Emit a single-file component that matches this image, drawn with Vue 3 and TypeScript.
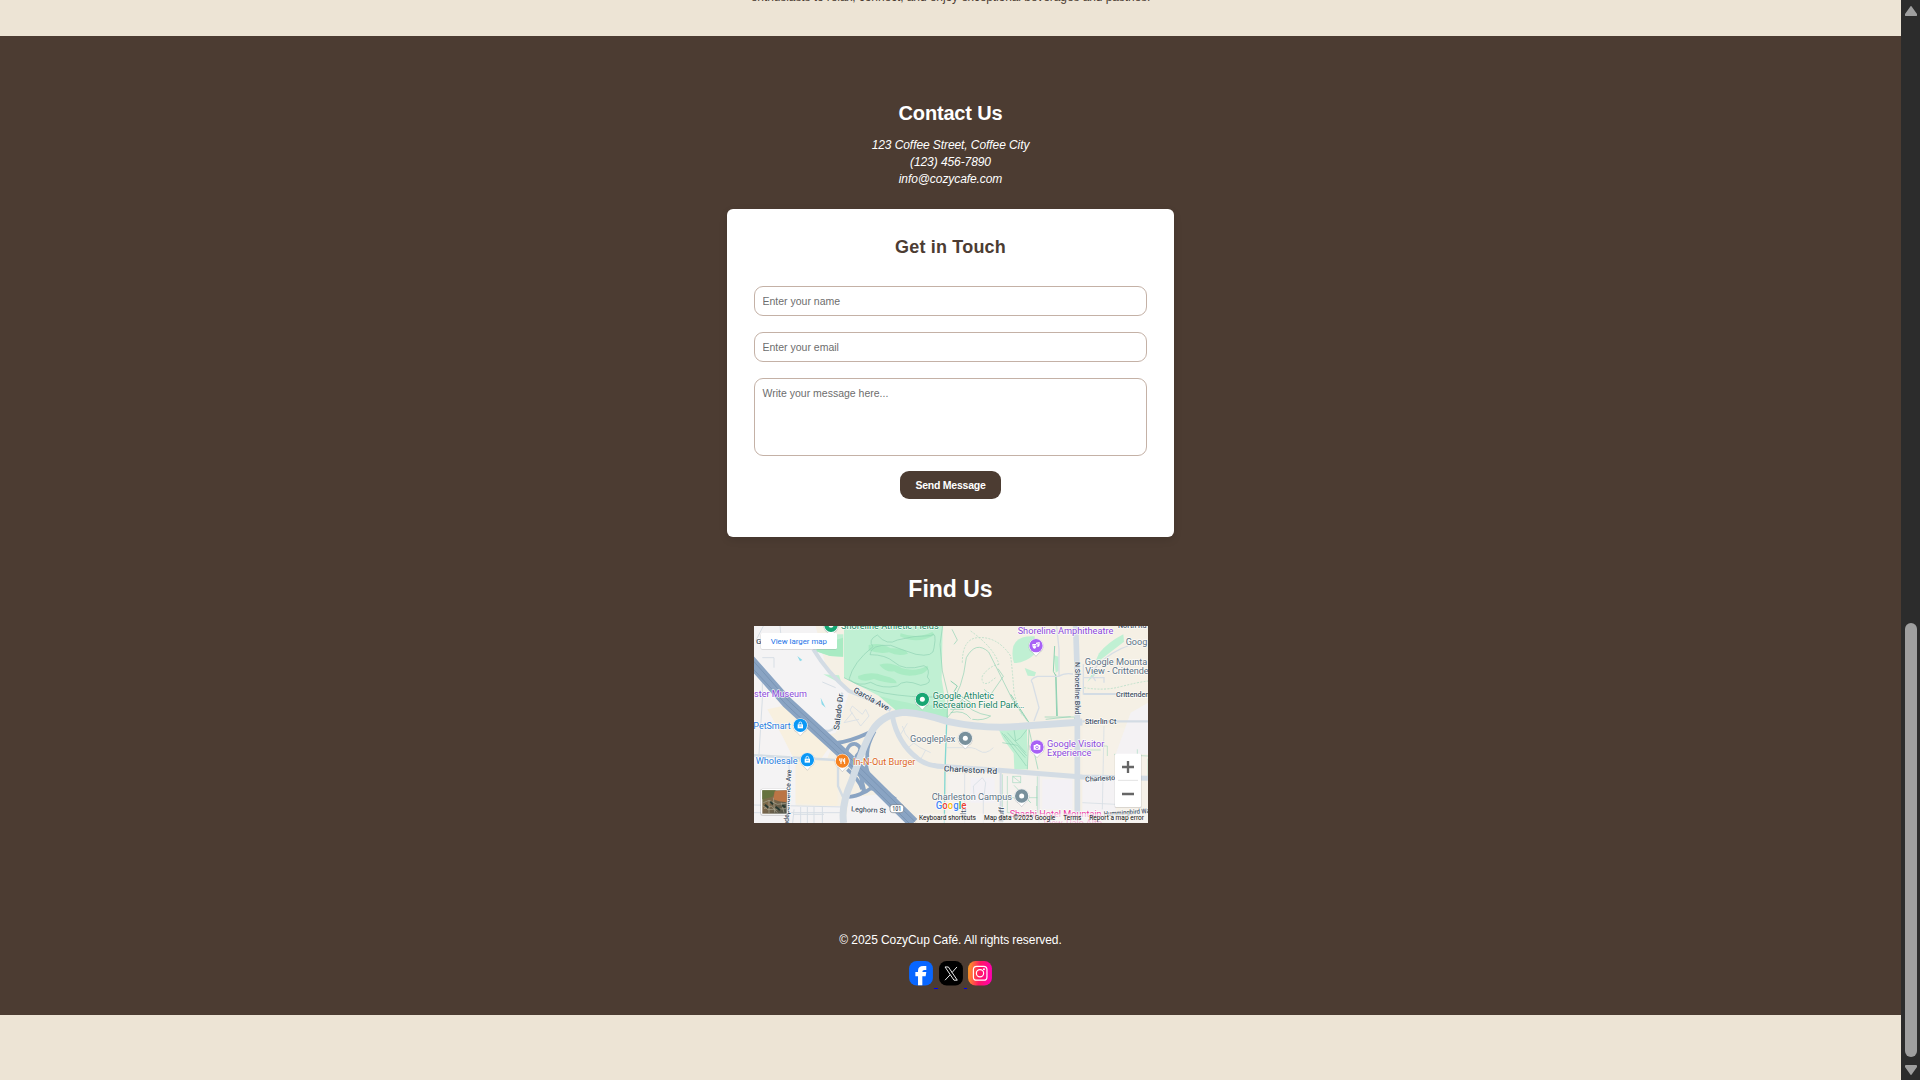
<script setup lang="ts">
import { ref } from 'vue'

const name = ref('')
const email = ref('')
const message = ref('')

interface Label {
  text: string
  x: number
  y: number
  width: number
  kind: string
  rotate?: number
}

const labels: Label[] = [
  { text: 'Shoreline Athletic Fields', x: 261, y: 8, width: 293, kind: 'park' },
  { text: 'Google Athletic', x: 536, y: 219, width: 184, kind: 'park' },
  { text: 'Recreation Field Park…', x: 536, y: 247, width: 275, kind: 'park' },
  { text: 'Shoreline Amphitheatre', x: 791, y: 25, width: 287, kind: 'fun' },
  { text: 'ster Museum', x: 0, y: 212, width: 159, kind: 'fun' },
  { text: 'Google Visitor', x: 879, y: 362, width: 172, kind: 'fun' },
  { text: 'Experience', x: 879, y: 389, width: 133, kind: 'fun' },
  { text: 'PetSmart', x: -2, y: 310, width: 112, kind: 'shop' },
  { text: 'Wholesale', x: 5, y: 413, width: 126, kind: 'shop' },
  { text: 'In-N-Out Burger', x: 297, y: 418, width: 187, kind: 'food' },
  { text: 'Googleplex', x: 468, y: 349, width: 136, kind: 'place' },
  { text: 'Charleston Campus', x: 533, y: 522, width: 241, kind: 'place' },
  { text: 'Goog', x: 1115, y: 56, width: 65, kind: 'place' },
  { text: 'Google Mounta', x: 992, y: 117, width: 188, kind: 'place' },
  { text: 'View - Crittende', x: 994, y: 144, width: 190, kind: 'place' },
  { text: 'Shashi Hotel Mountain', x: 767, y: 573, width: 276, kind: 'hotel' },
  { text: 'View, Palo Alto', x: 868, y: 599, width: 176, kind: 'hotel' },
  { text: 'North Rd', x: 1092, y: 7, width: 86, kind: 'road' },
  { text: 'Crittenden', x: 1086, y: 213, width: 100, kind: 'road' },
  { text: 'Stierlin Ct', x: 993, y: 295, width: 94, kind: 'road' },
  { text: 'Charlesto', x: 994, y: 467, width: 90, kind: 'road', rotate: -3 },
  { text: 'Hummingbird Way', x: 1050, y: 571, width: 146, kind: 'road', rotate: -4 },
  { text: 'Leghorn St', x: 291, y: 556, width: 105, kind: 'road', rotate: 3 },
  { text: 'N Shoreline Blvd', x: 964, y: 108, width: 158, kind: 'road', rotate: 90 },
  { text: 'Salado Dr', x: 255, y: 313, width: 110, kind: 'street', rotate: -83 },
  { text: 'Garcia Ave', x: 296, y: 197, width: 119, kind: 'street', rotate: 29 },
  { text: 'Charleston Rd', x: 569, y: 436, width: 160, kind: 'street', rotate: 3 },
  { text: 'Independence Ave', x: 103, y: 606, width: 175, kind: 'road', rotate: -87 },
  { text: 'Huff', x: 748, y: 588, width: 45, kind: 'road', rotate: -88 },
  { text: 'Alta', x: 636, y: 580, width: 38, kind: 'road', rotate: -90 },
]

interface Pin {
  x: number
  y: number
  color: string
  glyph: string
}

const pins: Pin[] = [
  { x: 231, y: -2, color: '#18a673', glyph: 'dot' },
  { x: 505, y: 220, color: '#18a673', glyph: 'dot' },
  { x: 634, y: 337, color: '#78909c', glyph: 'dot' },
  { x: 803, y: 510, color: '#78909c', glyph: 'dot' },
  { x: 846, y: 59, color: '#a861f5', glyph: 'mask' },
  { x: 849, y: 363, color: '#a861f5', glyph: 'camera' },
  { x: 139, y: 298, color: '#0b98f5', glyph: 'bag' },
  { x: 160, y: 401, color: '#0b98f5', glyph: 'bag' },
  { x: 265, y: 405, color: '#f58220', glyph: 'fork' },
]
</script>

<template>
  <div class="window">
    <main class="page">
      <section class="about">
        <p>enthusiasts to relax, connect, and enjoy exceptional beverages and pastries.</p>
      </section>

      <section class="contact">
        <h2>Contact Us</h2>
        <address>
          <span>123 Coffee Street, Coffee City</span>
          <span>(123) 456-7890</span>
          <span>info@cozycafe.com</span>
        </address>

        <form class="card" @submit.prevent>
          <h3>Get in Touch</h3>
          <input v-model="name" type="text" placeholder="Enter your name" />
          <input v-model="email" type="email" placeholder="Enter your email" />
          <textarea v-model="message" placeholder="Write your message here..."></textarea>
          <button type="submit">Send Message</button>
        </form>

        <h1>Find Us</h1>
        <svg class="map" viewBox="0 0 1182 591" preserveAspectRatio="none">
          <defs>
            <linearGradient id="sat" x1="0" y1="0" x2="1" y2="1">
              <stop offset="0" stop-color="#647746" />
              <stop offset=".4" stop-color="#80694a" />
              <stop offset="1" stop-color="#4a5149" />
            </linearGradient>
          </defs>
          <rect width="1182" height="591" fill="#f5f0e5" />
          <!-- built-up blocks -->
          <path d="M0 0H185L215 120L285 200L245 320L210 330L0 100Z" fill="#f4f3f4" />
          <path d="M0 110L240 350L220 395L0 385Z" fill="#f5f3f3" />
          <path d="M0 388L125 398V540H270V591H0Z" fill="#f4f3f4" />
          <path d="M40 250L110 235L235 350L200 400H120L85 330Z" fill="#f8f0df" />
          <path d="M125 398H250V540L125 532Z" fill="#f8f0df" />
          <path d="M285 515L375 505L460 591H275Z" fill="#f4f3f4" />
          <path d="M580 445H960V591H580Z" fill="#f5f2ee" />
          <path d="M650 455H722V530H650ZM865 460H955V550H865Z" fill="#f3f1f5" />
          <path d="M985 305H1182V591H985Z" fill="#f6f1e8" />
          <path d="M1130 260L1182 230V385H1085Z" fill="#f4f2f4" />
          <path d="M985 460H1085V591H985Z" fill="#f4f2f4" />
          <!-- parks -->
          <g fill="#c0f0d3">
            <path d="M270 0H566L563 160L582 276L425 252L375 210L270 155Z" />
            <path d="M205 25H268V92L228 90L184 75Z" />
            <path d="M208 145L255 148L264 175Z" />
            <path d="M778 60Q790 28 842 31V85Q812 112 780 111Q772 88 778 60Z" />
            <path d="M812 126L846 139L842 151L821 149Z" />
            <path d="M735 312L819 308L821 430L781 431L779 382L748 340Z" />
            <path d="M1108 25Q1060 50 1035 82L1026 103L1035 105L1070 78L1110 47Z" />
            <path d="M900 88L914 92V134L905 140ZM1020 133L1040 131L1000 168Z" />
          </g>
          <g fill="#a9ebc3">
            <path d="M205 55L267 35V92L228 90L184 75Z" />
            <path d="M375 210L412 220L490 236L582 240V276L425 252Z" opacity=".65" />
            <path d="M344 57Q380 47 410 67Q455 66 462 83Q433 92 405 79Q375 85 344 73ZM312 150Q350 134 390 149Q430 158 428 172Q390 171 360 159Q330 170 313 158ZM376 116Q410 105 443 126Q485 139 520 119Q530 129 504 143Q455 158 420 136Q395 140 376 116ZM440 22Q490 40 535 18L542 27Q490 57 438 31Z" />
          </g>
          <!-- trails -->
          <g fill="none" stroke="#8fd2b3" stroke-width="2">
            <path d="M285 160Q298 108 357 62Q340 42 370 27Q400 61 430 42Q480 28 530 29Q550 12 540 66Q540 95 486 85Q440 70 410 58Q350 54 348 86Q395 86 420 108Q450 137 510 119Q530 128 520 153Q540 172 500 178Q450 157 430 180Q385 190 350 169Q315 184 285 160" />
            <path d="M270 155Q350 200 430 207Q520 218 575 210M566 0L558 55L565 135L582 205L579 280" />
            <path d="M594 10L610 42L600 55M588 230Q625 195 637 95Q665 43 704 78L775 220L820 285M732 128L748 151L710 206L690 190M650 278Q630 250 590 260M625 220Q645 260 710 270Q690 285 655 280M625 220L580 275M589 250H630" />
            <path d="M590 165L610 180L600 197L650 230M770 205L825 290M902 60L898 136L906 150L910 270M905 145L908 270" stroke-width="3" />
            <path d="M872 273H962V285M875 280L950 272M751 325L814 395M760 320L815 380M743 320L817 420M780 310L785 345L800 335L819 310M745 350L790 358L818 390M820 430L825 310L852 430" />
            <path d="M578 292L573 430L571 591" stroke="#83d8d2" stroke-width="4" />
            <path d="M745 445V591M760 450V560H850V451M776 451H800V470H776ZM776 451L800 470M780 478L830 530L792 490M848 480V540M740 515H850M775 570L850 565M981 360H1060V390M1080 385L1182 390M1150 370V390M985 372H1040M1182 398V450" stroke-width="1.5" />
          </g>
          <g fill="none" stroke="#a8d9c0" stroke-width="2" stroke-dasharray="6 4">
            <path d="M625 110Q625 40 670 35Q730 30 770 90Q775 130 780 200Q790 240 805 270M650 15Q720 65 735 115M735 115Q705 120 685 150Q680 180 705 170L725 155M990 185Q1050 195 1100 182T1182 165" />
          </g>
          <!-- minor roads -->
          <g fill="none" stroke="#d7dee5" stroke-width="4">
            <path d="M840 285L855 245L835 170Q825 160 850 151H915Q930 140 957 144M915 150V70L908 0M988 115V204H1110M990 155H1050V170M1160 50Q1100 60 1050 100T1025 165" />
            <path d="M28 0L5 45M25 150V220L15 385M78 0L85 70M60 125V95H25M245 185L205 168M120 550L116 591M0 537L270 543M140 543V591M160 543V591M180 543V591M205 543V591M0 560H270M105 398V591M120 565H210" stroke-width="3" />
            <path d="M445 300Q455 350 530 380M460 292L440 325M515 372L500 400M465 363L480 350M630 367Q655 360 675 374T718 365M579 365H630M320 300L288 252L295 240L325 265L335 250L345 270L320 300M295 260L270 290L315 280M660 510L658 480L685 455L695 470L690 510M688 510V591M632 440V591M855 450V591M1050 300L1045 550M985 530L1085 535" stroke-width="2.5" />
          </g>
          <g fill="none" stroke="#d3dce4">
            <path d="M0 388L245 402" stroke-width="8" />
            <path d="M178 70Q220 140 285 195Q365 225 410 252" stroke-width="12" />
            <path d="M265 200Q252 240 250 290Q235 330 190 305M985 286H1182M252 400V480L270 520" stroke-width="7" />
            <path d="M965 0L970 150V591" stroke-width="17" />
            <path d="M989 204H1110M740 440V591" stroke-width="6" />
            <path d="M415 270Q430 350 490 397Q520 422 575 422L735 433L985 453L1182 457" stroke-width="15" />
          </g>
          <!-- freeway -->
          <g fill="none" stroke="#8aa4c3">
            <path d="M-15 100L100 230L285 400L478 591" stroke-width="34" />
            <path d="M180 310L240 352Q280 350 350 318M362 315Q337 360 340 390Q330 420 350 460L405 505" stroke-width="11" />
            <path d="M275 390Q280 350 305 354Q330 365 308 389Q298 410 315 430L330 490Q330 508 285 513Q330 504 350 487Q385 490 425 520M280 430Q315 460 325 490" stroke-width="11" />
          </g>
          <g fill="none" stroke="#728eae" stroke-width="2">
            <path d="M-8 98L104 225L290 398L484 588M-20 110L96 235L280 407L468 594" />
          </g>
          <path d="M269 591Q260 540 293 465Q332 350 354 315Q385 265 450 259Q510 263 580 286Q690 310 800 301L985 288" fill="none" stroke="#d3dce4" stroke-width="21" />
          <path d="M130 90L145 102L138 106ZM200 215L215 245L203 235Z" fill="#8cdaea" />

          <rect x="408" y="536" width="41" height="24" rx="8" fill="#fff" stroke="#697583" stroke-width="2" />
          <text x="415" y="555" class="label road" textLength="27" lengthAdjust="spacingAndGlyphs">101</text>
          <text x="6" y="54" class="label street">G</text>

          <text
            v-for="label in labels"
            :key="label.text"
            :class="['label', label.kind]"
            :x="label.x"
            :y="label.y"
            :textLength="label.width"
            lengthAdjust="spacingAndGlyphs"
            :transform="label.rotate ? `rotate(${label.rotate} ${label.x} ${label.y})` : undefined"
          >{{ label.text }}</text>

          <g v-for="pin in pins" :key="`${pin.x}-${pin.y}`" :transform="`translate(${pin.x} ${pin.y})`">
            <path d="M0 31L-10 20A23 23 0 1 1 10 20Z" fill="#8b9198" opacity=".45" transform="translate(0 2)" />
            <path d="M0 31L-10 20A22 22 0 1 1 10 20Z" fill="#fff" />
            <circle r="20" :fill="pin.color" />
            <circle v-if="pin.glyph === 'dot'" r="7.5" fill="#fff" />
            <g v-else-if="pin.glyph === 'bag'">
              <path d="M-8 -3H8V9H-8Z" fill="#fff" />
              <path d="M-4 -3V-6A4 4 0 0 1 4 -6V-3" fill="none" stroke="#fff" stroke-width="2.5" />
              <path d="M-4 2H4" :stroke="pin.color" stroke-width="2" />
            </g>
            <g v-else-if="pin.glyph === 'camera'">
              <path d="M-10 -6H-5L-3 -9H3L5 -6H10V8H-10Z" fill="#fff" />
              <circle cy="1" r="4" fill="none" :stroke="pin.color" stroke-width="2.5" />
            </g>
            <g v-else-if="pin.glyph === 'mask'" fill="#fff">
              <path d="M0 -9L11 -11V-2Q10 5 4 4V-5H0Z" />
              <path d="M-11 -5H1V3Q-1 10 -6 9Q-11 7 -11 -5Z" />
              <path d="M-8 0H-5M-3 0H0M5 -6H8" :stroke="pin.color" stroke-width="2" />
            </g>
            <g v-else fill="none" stroke="#fff" stroke-width="3">
              <path d="M-8 -8V-1Q-4 4 -1 -1V-8M-4 -8V9M7 9V-8Q2 -6 3 2H7" />
            </g>
          </g>

          <!-- map controls -->
          <rect x="20" y="22" width="229" height="49" rx="5" fill="#777" opacity=".25" />
          <rect x="21" y="21" width="228" height="48" rx="4" fill="#fff" />
          <text x="50" y="54" class="link" textLength="169" lengthAdjust="spacingAndGlyphs">View larger map</text>

          <rect x="19" y="488" width="84" height="81" rx="6" fill="#777" opacity=".35" />
          <rect x="21" y="489" width="80" height="77" rx="5" fill="#fff" />
          <rect x="25" y="493" width="73" height="70" fill="url(#sat)" />
          <path d="M25 493H65L55 512L25 520Z" fill="#66733e" />
          <path d="M62 496L98 493V529L75 526L58 520Z" fill="#bb7545" />
          <path d="M28 530L45 523L70 535L96 532M30 548L52 540L70 560M45 523V562M82 530L90 560M58 515L62 560M25 538L42 551L96 548" fill="none" stroke="#a9a693" stroke-width="2" />
          <path d="M33 536L43 545M65 542L78 553M49 527L57 535M84 538L94 543" stroke="#283830" stroke-width="6" />

          <rect x="1082" y="384" width="81" height="162" rx="4" fill="#777" opacity=".22" />
          <rect x="1083" y="383" width="78" height="160" rx="4" fill="#fff" />
          <path d="M1092 463H1152" stroke="#e3e3e3" stroke-width="3" />
          <path d="M1104 423H1140M1122 405V441M1104 504H1140" stroke="#666" stroke-width="7" />

          <rect x="490" y="563" width="692" height="28" fill="#f7f6f4" opacity=".65" />
          <text x="545" y="548" class="brand" textLength="92" lengthAdjust="spacingAndGlyphs"><tspan fill="#4285f4">G</tspan><tspan fill="#ea4335">o</tspan><tspan fill="#fbbc04">o</tspan><tspan fill="#4285f4">g</tspan><tspan fill="#34a853">l</tspan><tspan fill="#ea4335">e</tspan></text>
          <g class="legal">
            <text x="495" y="582" textLength="171" lengthAdjust="spacingAndGlyphs">Keyboard shortcuts</text>
            <text x="690" y="582" textLength="214" lengthAdjust="spacingAndGlyphs">Map data ©2025 Google</text>
            <text x="928" y="582" textLength="54" lengthAdjust="spacingAndGlyphs">Terms</text>
            <text x="1006" y="582" textLength="164" lengthAdjust="spacingAndGlyphs">Report a map error</text>
          </g>
        </svg>

        <footer>
          <p>© 2025 CozyCup Café. All rights reserved.</p>
          <nav class="social">
            <svg viewBox="0 0 72 74">
              <rect width="72" height="74" rx="23" fill="#0866ff" />
              <path d="M27 73V46H19V33H27V29Q27 15 43 15H52V27H46Q40 27 40 33H52L50 46H40V73Z" fill="#fff" />
            </svg>
            <span class="gap"></span>
            <svg viewBox="0 0 72 74">
              <rect width="72" height="74" rx="23" fill="#000" />
              <path d="M18 18H28L55 58H45ZM54 18L39 35M33 42L18 58" fill="none" stroke="#e8e8e8" stroke-width="3" />
            </svg>
            <span class="gap"></span>
            <svg viewBox="0 0 72 74">
              <defs>
                <linearGradient id="insta" x1="0" y1=".45" x2="1" y2=".55">
                  <stop offset="0" stop-color="#ff9a25" />
                  <stop offset=".48" stop-color="#ff1763" />
                  <stop offset="1" stop-color="#ff00b0" />
                </linearGradient>
              </defs>
              <rect width="72" height="74" rx="23" fill="url(#insta)" />
              <rect x="16" y="16" width="41" height="42" rx="10" fill="none" stroke="#fff" stroke-width="3.500" />
              <circle cx="36" cy="37" r="11" fill="none" stroke="#fff" stroke-width="3.500" />
              <circle cx="48" cy="25" r="3" fill="#fff" />
            </svg>
          </nav>
        </footer>
      </section>
    </main>

    <aside class="scrollbar">
      <svg class="arrow" viewBox="0 0 12 10"><path d="M5 1Q6 -1 7 1L12 8Q12.500 10 11 10H1Q-.5 10 0 8Z" /></svg>
      <div class="thumb"></div>
      <svg class="arrow" viewBox="0 0 12 10"><path d="M5 9Q6 11 7 9L12 2Q12.500 0 11 0H1Q-.5 0 0 2Z" /></svg>
    </aside>
  </div>
</template>

<style>
body {
  margin: 0;
  overflow: hidden;
}
</style>

<style scoped>
.window {
  display: flex;
  height: 1080px;
  overflow: hidden;
  font-family: "Liberation Sans", Arial, sans-serif;
}

.page {
  flex: 1;
  background: #ede4d5;
}

h1,
h2,
h3,
p {
  margin: 0;
}

.about {
  display: flex;
  justify-content: center;
  align-items: flex-end;
  height: 36px;
}

.about p {
  margin-bottom: 29px;
  color: #4c3c32;
  font-size: 12px;
  line-height: 20px;
  letter-spacing: -0.09px;
  white-space: nowrap;
}

.contact {
  display: flex;
  flex-direction: column;
  align-items: center;
  box-sizing: border-box;
  height: 979px;
  padding-top: 65px;
  background: #4c3c32;
  color: #fff;
}

h2 {
  font-size: 20px;
  line-height: 24px;
  letter-spacing: -0.17px;
}

address {
  display: flex;
  flex-direction: column;
  align-items: center;
  margin: 12px 0 21px;
  font-size: 12px;
  line-height: 17px;
  letter-spacing: -0.08px;
}

.card {
  display: flex;
  flex-direction: column;
  align-items: center;
  box-sizing: border-box;
  width: 447px;
  height: 328px;
  padding: 27px 27px 38px;
  border-radius: 6px;
  background: #fff;
  box-shadow: 0 3px 8px rgba(0, 0, 0, 0.1);
}

h3 {
  margin-bottom: 28px;
  color: #4c3c32;
  font-size: 18px;
  line-height: 22px;
  letter-spacing: 0.2px;
}

input,
textarea {
  display: block;
  box-sizing: border-box;
  flex-shrink: 0;
  width: 393px;
  height: 30px;
  margin: 0 0 16px;
  padding: 8px 7.5px;
  border: 1px solid #c4b1a6;
  border-radius: 9px;
  outline: none;
  background: #fff;
  font-family: inherit;
  font-size: 10.5px;
}

input::placeholder,
textarea::placeholder {
  color: #6d6d6d;
}

textarea {
  height: 78px;
  margin-bottom: 15px;
  resize: none;
}

button {
  width: 101px;
  height: 28px;
  flex-shrink: 0;
  padding: 0;
  border: 0;
  border-radius: 9px;
  background: #4c3c32;
  color: #fff;
  font-family: inherit;
  font-size: 10.5px;
  font-weight: 700;
  letter-spacing: -0.24px;
}

h1 {
  margin: 38px 0 23px;
  font-size: 23px;
  line-height: 28px;
}

.map {
  display: block;
  flex-shrink: 0;
  width: 394px;
  height: 197px;
  margin-left: 1px;
  overflow: hidden;
}

.map text {
  font-family: Roboto, Arial, sans-serif;
}

.label {
  font-size: 26px;
  paint-order: stroke;
  stroke: #fff;
  stroke-width: 4px;
  stroke-opacity: 0.8;
  stroke-linejoin: round;
}

.park { fill: #168562; }
.fun { fill: #8d49db; }
.shop { fill: #287de0; }
.food { fill: #dc671b; }
.place { fill: #5c7283; }
.hotel { fill: #e936a2; }
.street { fill: #455365; font-size: 24px; font-weight: 500; }
.road { fill: #455365; font-size: 21px; font-weight: 500; }
.link { fill: #1a73e8; font-size: 24px; }

.brand {
  font-size: 31px;
  font-weight: 500;
  paint-order: stroke;
  stroke: #fff;
  stroke-width: 4px;
}

.legal {
  fill: #111;
  font-size: 21px;
}

footer {
  display: flex;
  flex-direction: column;
  align-items: center;
  margin-top: 109px;
}

footer p {
  font-size: 12px;
  line-height: 16px;
  letter-spacing: -0.08px;
}

.social {
  display: flex;
  margin-top: 13px;
}

.social svg {
  width: 24px;
  height: 24.5px;
}

.gap {
  width: 3.5px;
  height: 27px;
  margin: 0 1px;
  border-bottom: 1px solid #00e;
}

.scrollbar {
  display: flex;
  flex-direction: column;
  align-items: center;
  box-sizing: border-box;
  width: 19px;
  padding: 6px 0 5px 1px;
  background: #2c2c2c;
}

.arrow {
  width: 12px;
  height: 10px;
  fill: #9f9f9f;
}

.thumb {
  width: 12px;
  height: 434px;
  margin: auto 0 8px;
  border-radius: 6px;
  background: #9f9f9f;
}
</style>
